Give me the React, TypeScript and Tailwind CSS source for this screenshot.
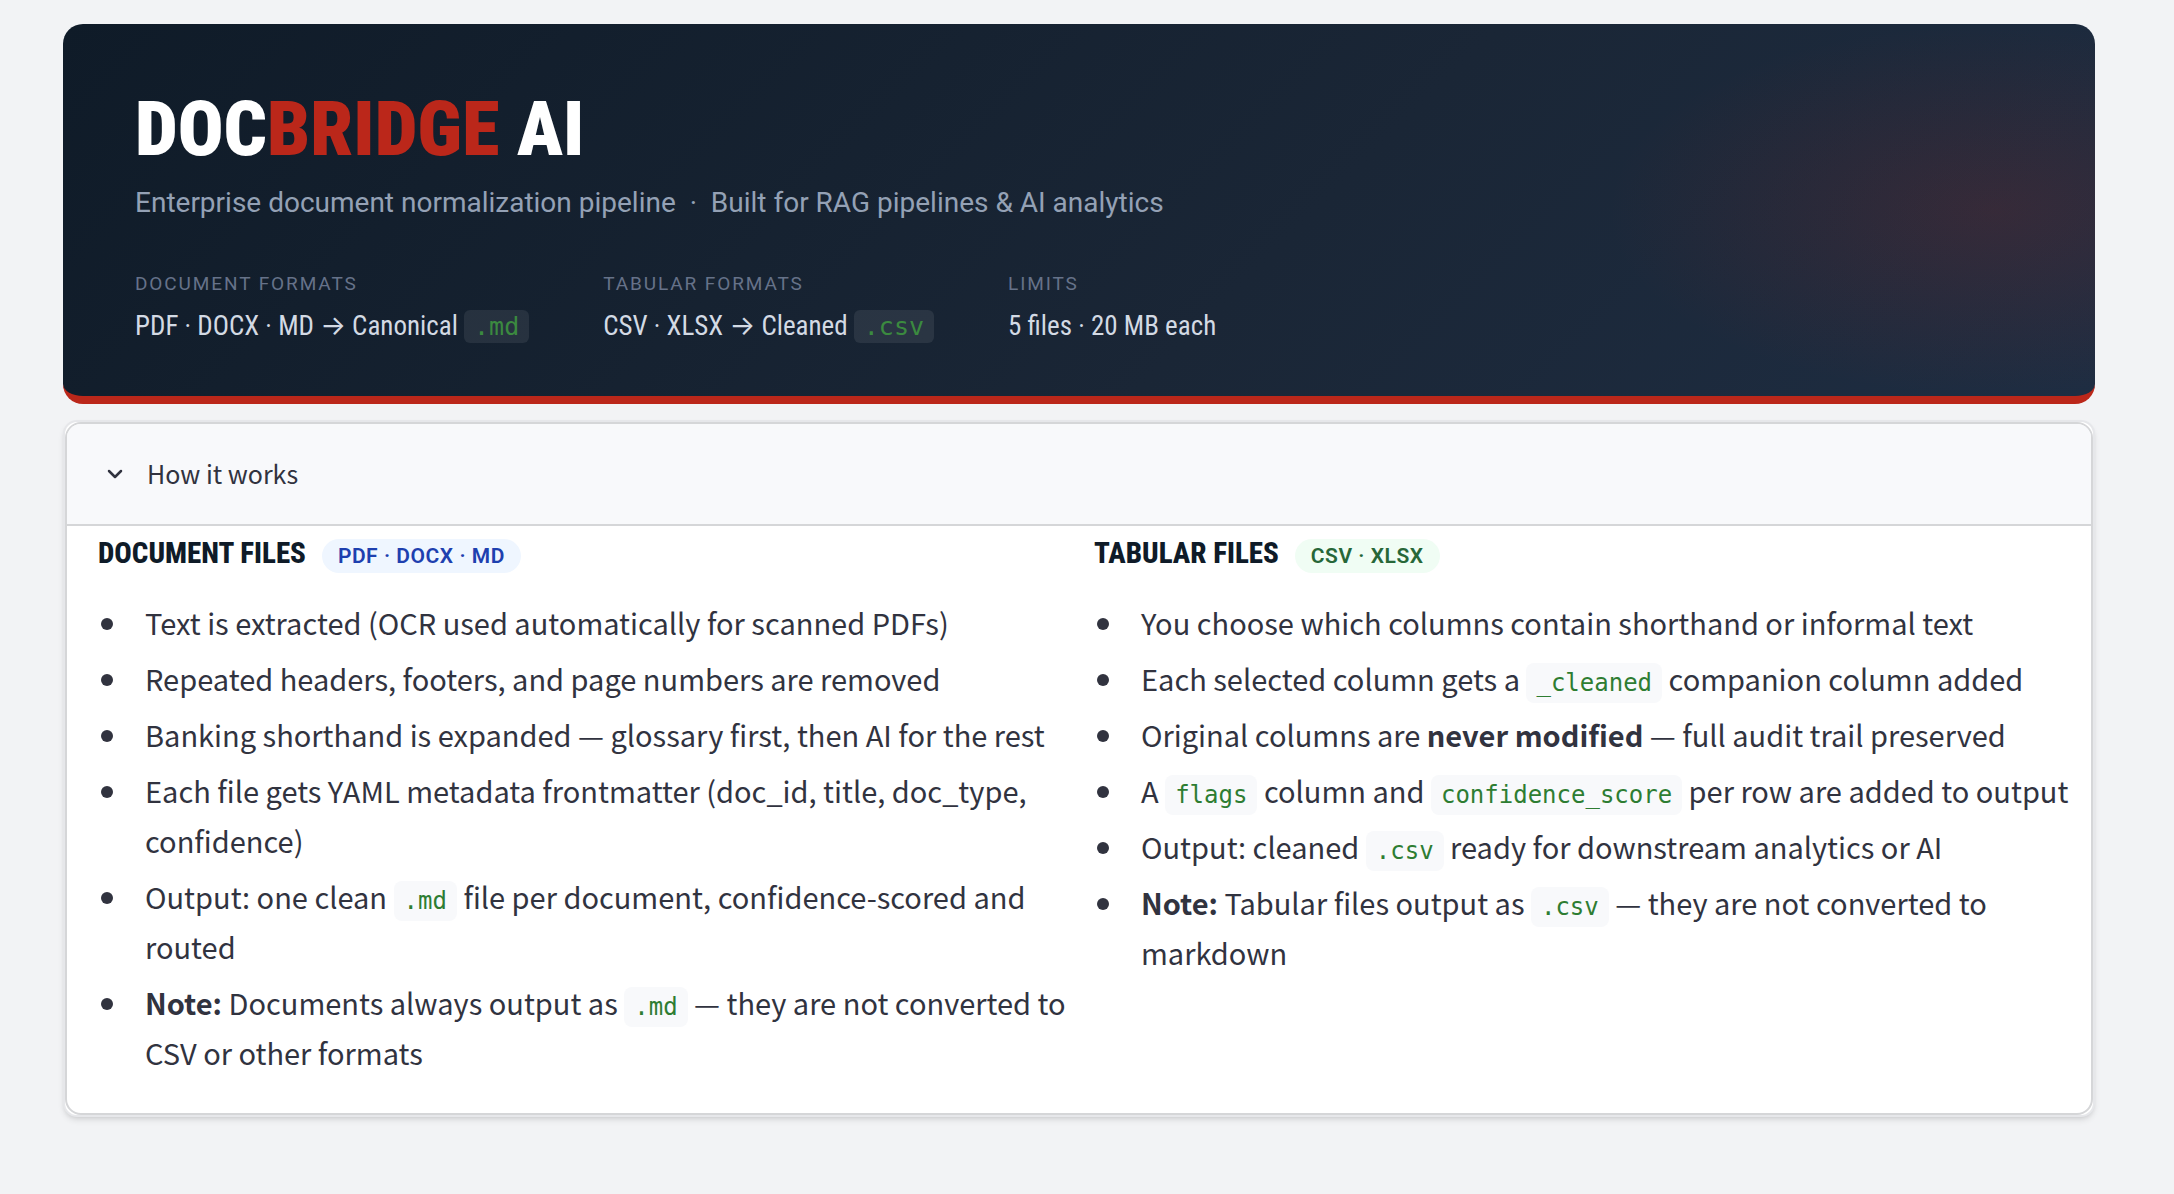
import { useState } from "react";
import { ChevronDown } from "lucide-react";

type HeroStatProps = {
  label: string;
  value: string;
  ext?: string;
};

function HeroStat({ label, value, ext }: HeroStatProps) {
  return (
    <div>
      <dt className="text-[19px] leading-7 tracking-widest text-[#667289] uppercase">
        {label}
      </dt>
      <dd className="mt-2 font-['Roboto_Condensed',Inter,sans-serif] text-[27px] leading-10 text-[#d3dae4]">
        {value}{" "}
        {ext && (
          <code className="rounded-md bg-white/8 px-[10px] py-[2px] font-['DejaVu_Sans_Mono',monospace] text-[25px] leading-none text-[#3b8a3f]">
            {ext}
          </code>
        )}
      </dd>
    </div>
  );
}

function Hero() {
  return (
    <header className="rounded-[20px] border-b-8 border-[#bb271a] bg-[radial-gradient(ellipse_19%_50%_at_95%_50%,rgba(187,39,26,0.16),transparent),linear-gradient(135deg,#0f1b28_0%,#1a2636_60%,#1e2d42_100%)] px-[72px] pt-[67px] pb-[50px]">
      <h1 className="font-['Roboto_Condensed',sans-serif] text-[76px] leading-[76px] font-black text-white">
        DOC<span className="text-[#bb271a]">BRIDGE</span> AI
      </h1>
      <p className="mt-4 text-[28px] leading-10 text-[#94a1b5]">
        Enterprise document normalization pipeline &nbsp;·&nbsp; Built for RAG
        pipelines &amp; AI analytics
      </p>
      <dl className="mt-[47px] flex flex-wrap gap-x-[74px] gap-y-6">
        <HeroStat
          label="Document formats"
          value="PDF · DOCX · MD → Canonical"
          ext=".md"
        />
        <HeroStat
          label="Tabular formats"
          value="CSV · XLSX → Cleaned"
          ext=".csv"
        />
        <HeroStat label="Limits" value="5 files · 20 MB each" />
      </dl>
    </header>
  );
}

function Code({ children }: { children: React.ReactNode }) {
  return (
    <code className="rounded-lg bg-[#f8f9fb] px-[10px] py-[6px] font-['DejaVu_Sans_Mono',monospace] text-[24px] leading-none text-[#2e7d32]">
      {children}
    </code>
  );
}

type FileColumnProps = {
  title: string;
  badge: string;
  badgeClass: string;
  items: React.ReactNode[];
};

function FileColumn({ title, badge, badgeClass, items }: FileColumnProps) {
  return (
    <section>
      <div className="flex items-baseline gap-4">
        <h2 className="font-['Roboto_Condensed',sans-serif] text-[29px] leading-[34px] font-extrabold text-[#0f1b28] uppercase">
          {title}
        </h2>
        <span
          className={`rounded-full px-4 font-[Roboto,sans-serif] text-[21px] leading-[34px] font-semibold tracking-wide ${badgeClass}`}
        >
          {badge}
        </span>
      </div>
      <ul className="mt-6 flex flex-col gap-[6px]">
        {items.map((item, i) => (
          <li key={i} className="flex">
            <span className="mt-[21px] mr-8 ml-[3px] size-3 shrink-0 rounded-full bg-[#31333f]" />
            <span>{item}</span>
          </li>
        ))}
      </ul>
    </section>
  );
}

const documentItems = [
  "Text is extracted (OCR used automatically for scanned PDFs)",
  "Repeated headers, footers, and page numbers are removed",
  "Banking shorthand is expanded — glossary first, then AI for the rest",
  "Each file gets YAML metadata frontmatter (doc_id, title, doc_type, confidence)",
  <>
    Output: one clean <Code>.md</Code> file per document, confidence-scored and
    routed
  </>,
  <>
    <strong>Note:</strong> Documents always output as <Code>.md</Code> — they
    are not converted to CSV or other formats
  </>,
];

const tabularItems = [
  "You choose which columns contain shorthand or informal text",
  <>
    Each selected column gets a <Code>_cleaned</Code> companion column added
  </>,
  <>
    Original columns are <strong>never modified</strong> — full audit trail
    preserved
  </>,
  <>
    A <Code>flags</Code> column and <Code>confidence_score</Code> per row are
    added to output
  </>,
  <>
    Output: cleaned <Code>.csv</Code> ready for downstream analytics or AI
  </>,
  <>
    <strong>Note:</strong> Tabular files output as <Code>.csv</Code> — they are
    not converted to markdown
  </>,
];

function HowItWorks() {
  const [open, setOpen] = useState(true);

  return (
    <div className="mt-4 rounded-[14px] border-2 border-[#e6e7ea] bg-white font-['Noto_Sans_CJK_JP',sans-serif] text-[#31333f] shadow-md">
      <div className="overflow-hidden rounded-2xl border-2 border-[#d5d6d8]">
        <button
          type="button"
          aria-expanded={open}
          onClick={() => setOpen(!open)}
          className="flex h-[100px] w-full items-center gap-5 bg-[#f8f9fb] pl-9 text-[25px]"
        >
          <ChevronDown size={24} strokeWidth={2.5} />
          How it works
        </button>
        {open && (
          <div className="grid grid-cols-2 gap-3 border-t-2 border-[#d5d6d8] pt-[10px] pr-[13px] pb-9 pl-[31px] text-[29px] leading-[50px]">
            <FileColumn
              title="Document files"
              badge="PDF · DOCX · MD"
              badgeClass="bg-[#eff6ff] text-[#1e40af]"
              items={documentItems}
            />
            <FileColumn
              title="Tabular files"
              badge="CSV · XLSX"
              badgeClass="bg-[#f0fdf4] text-[#276738]"
              items={tabularItems}
            />
          </div>
        )}
      </div>
    </div>
  );
}

export default function App() {
  return (
    <main className="min-h-screen bg-[#f2f3f5] pt-6 pr-[79px] pb-6 pl-[63px] font-[Roboto,sans-serif]">
      <Hero />
      <HowItWorks />
    </main>
  );
}
